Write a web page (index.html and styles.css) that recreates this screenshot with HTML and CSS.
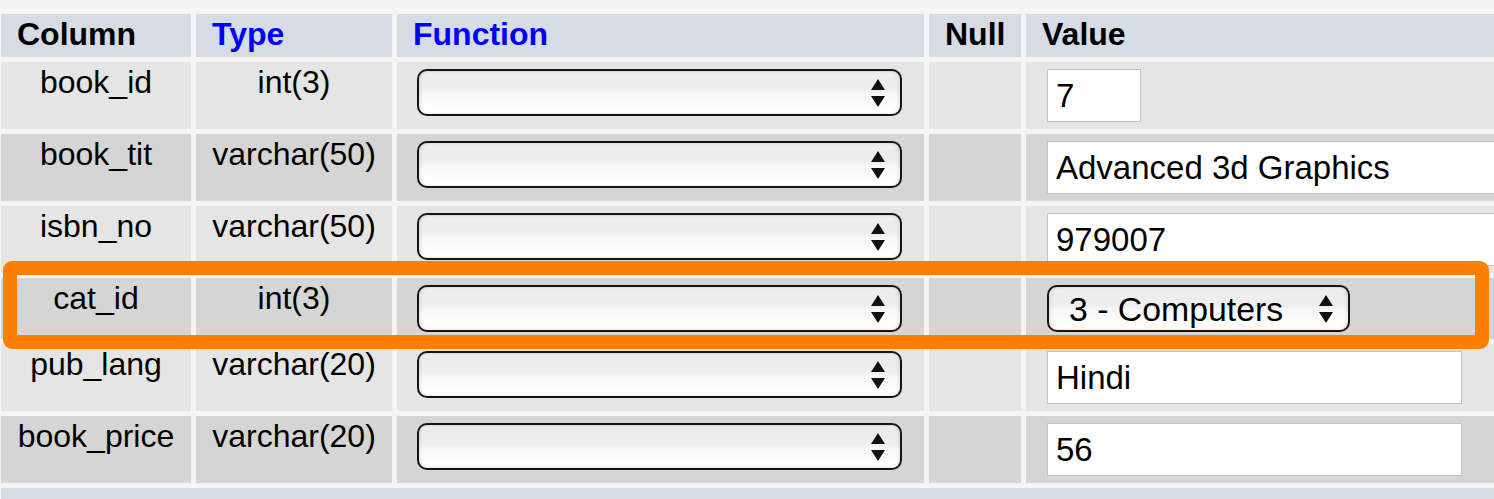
FILE: index.html
```html
<!DOCTYPE html>
<html lang="en">
<head>
<meta charset="utf-8">
<title>Insert row</title>
<link rel="stylesheet" href="styles.css">
</head>
<body>
<div class="page">
  <div class="grid">
    <div class="row head">
      <div class="th">Column</div>
      <div class="th link">Type</div>
      <div class="th link">Function</div>
      <div class="th">Null</div>
      <div class="th">Value</div>
    </div>

    <div class="row odd">
      <div class="td name">book_id</div>
      <div class="td type">int(3)</div>
      <div class="td ctl"><div class="select func"><span class="sel-text"></span><svg class="arrows" width="14" height="28" viewBox="0 0 14 28"><path d="M7 0 L14 11 L0 11 Z M0 17 L14 17 L7 28 Z" fill="#111"/></svg></div></div>
      <div class="td null"></div>
      <div class="td ctl val"><input class="input short" type="text" value="7"></div>
    </div>

    <div class="row even">
      <div class="td name">book_tit</div>
      <div class="td type">varchar(50)</div>
      <div class="td ctl"><div class="select func"><span class="sel-text"></span><svg class="arrows" width="14" height="28" viewBox="0 0 14 28"><path d="M7 0 L14 11 L0 11 Z M0 17 L14 17 L7 28 Z" fill="#111"/></svg></div></div>
      <div class="td null"></div>
      <div class="td ctl val"><input class="input long" type="text" value="Advanced 3d Graphics"></div>
    </div>

    <div class="row odd">
      <div class="td name">isbn_no</div>
      <div class="td type">varchar(50)</div>
      <div class="td ctl"><div class="select func"><span class="sel-text"></span><svg class="arrows" width="14" height="28" viewBox="0 0 14 28"><path d="M7 0 L14 11 L0 11 Z M0 17 L14 17 L7 28 Z" fill="#111"/></svg></div></div>
      <div class="td null"></div>
      <div class="td ctl val"><input class="input long" type="text" value="979007"></div>
    </div>

    <div class="row even">
      <div class="td name">cat_id</div>
      <div class="td type">int(3)</div>
      <div class="td ctl"><div class="select func"><span class="sel-text"></span><svg class="arrows" width="14" height="28" viewBox="0 0 14 28"><path d="M7 0 L14 11 L0 11 Z M0 17 L14 17 L7 28 Z" fill="#111"/></svg></div></div>
      <div class="td null"></div>
      <div class="td ctl val"><div class="select fk"><span class="sel-text">3 - Computers</span><svg class="arrows" width="14" height="28" viewBox="0 0 14 28"><path d="M7 0 L14 11 L0 11 Z M0 17 L14 17 L7 28 Z" fill="#111"/></svg></div></div>
    </div>

    <div class="row odd">
      <div class="td name">pub_lang</div>
      <div class="td type">varchar(20)</div>
      <div class="td ctl"><div class="select func"><span class="sel-text"></span><svg class="arrows" width="14" height="28" viewBox="0 0 14 28"><path d="M7 0 L14 11 L0 11 Z M0 17 L14 17 L7 28 Z" fill="#111"/></svg></div></div>
      <div class="td null"></div>
      <div class="td ctl val"><input class="input mid" type="text" value="Hindi"></div>
    </div>

    <div class="row even">
      <div class="td name">book_price</div>
      <div class="td type">varchar(20)</div>
      <div class="td ctl"><div class="select func"><span class="sel-text"></span><svg class="arrows" width="14" height="28" viewBox="0 0 14 28"><path d="M7 0 L14 11 L0 11 Z M0 17 L14 17 L7 28 Z" fill="#111"/></svg></div></div>
      <div class="td null"></div>
      <div class="td ctl val"><input class="input mid" type="text" value="56"></div>
    </div>

    <div class="foot"></div>
  </div>
  <div class="highlight"></div>
</div>
</body>
</html>
```

FILE: styles.css
```css
html, body {
  margin: 0;
  padding: 0;
  overflow: hidden;
  background: #f5f5f5;
}

body {
  font-family: "Liberation Sans", Arial, Helvetica, sans-serif;
  color: #000;
}

.page {
  position: relative;
  width: 1494px;
  height: 499px;
  overflow: hidden;
}

.grid {
  display: grid;
  grid-template-columns: 190px 196px 527px 92px 520px;
  gap: 5px;
  margin-left: 1px;
  padding-top: 14px;
}

.row {
  display: contents;
}

.th {
  background: #d5dce3;
  font-size: 32px;
  font-weight: bold;
  line-height: 37px;
  padding: 2px 0 4px 16px;
}

.th.link {
  color: #0000ff;
}

.odd > .td {
  background: #e5e5e5;
}

.even > .td {
  background: #d5d5d5;
}

.td {
  font-size: 32px;
  line-height: 37px;
}

.name,
.type {
  text-align: center;
  padding-top: 2px;
}

.ctl {
  padding: 7px 0 7px 20px;
  display: flex;
  align-items: flex-start;
}

.ctl.val {
  padding-left: 21px;
}

.select {
  box-sizing: border-box;
  height: 47px;
  border: 2px solid #151515;
  border-radius: 10px;
  background: linear-gradient(to bottom, #ececec 0%, #efefef 45%, #f8f8f8 55%, #ffffff 100%);
  box-shadow: inset 2px 0 3px rgba(0, 0, 0, 0.08), inset -2px 0 3px rgba(0, 0, 0, 0.08);
  display: flex;
  align-items: center;
  justify-content: space-between;
  padding: 0 15px 0 20px;
}

.select.func {
  width: 485px;
}

.select.fk {
  width: 303px;
}

.sel-text {
  font-size: 33.8px;
  line-height: 40px;
  white-space: nowrap;
}

.arrows {
  display: block;
  flex: none;
}

.input {
  box-sizing: border-box;
  height: 53px;
  margin: 0;
  border: 1px solid #c2c2c2;
  border-radius: 0;
  background: #fff;
  font-family: "Liberation Sans", Arial, Helvetica, sans-serif;
  font-size: 33px;
  color: #000;
  padding: 0 8px;
  outline: none;
}

.input.short {
  width: 94px;
}

.input.mid {
  width: 415px;
}

.input.long {
  width: 560px;
}

.foot {
  grid-column: 1 / -1;
  height: 30px;
  background: #d5dce3;
}

.highlight {
  position: absolute;
  left: 3px;
  top: 261px;
  width: 1486px;
  height: 88px;
  box-sizing: border-box;
  border: 14px solid #ff8000;
  border-radius: 9px;
  pointer-events: none;
}
```
